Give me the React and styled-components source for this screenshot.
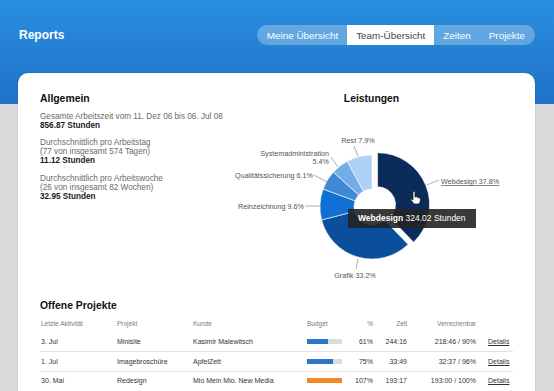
import styled, { createGlobalStyle } from 'styled-components';

const GlobalStyle = createGlobalStyle`
  html, body {
    margin: 0;
    height: 391px;
    overflow: hidden;
  }
  body {
    font-family: "Liberation Sans", Arial, sans-serif;
    background: linear-gradient(to bottom, #2a8fdf 0, #1f71c7 104px, #dadada 104px);
  }
`

const tabs = ['Meine Übersicht', 'Team-Übersicht', 'Zeiten', 'Projekte']

const stats = [
  { lines: ['Gesamte Arbeitszeit vom 11. Dez 06 bis 06. Jul 08'], value: '856.87 Stunden' },
  { lines: ['Durchschnittlich pro Arbeitstag', '(77 von insgesamt 574 Tagen)'], value: '11.12 Stunden' },
  { lines: ['Durchschnittlich pro Arbeitswoche', '(26 von insgesamt 82 Wochen)'], value: '32.95 Stunden' },
]

const slices = [
  { name: 'Webdesign', pct: 37.8, color: '#0b2c5a', explode: 6 },
  { name: 'Grafik', pct: 33.2, color: '#0b4e9b' },
  { name: 'Reinzeichnung', pct: 9.6, color: '#0f6fd4' },
  { name: 'Qualitätssicherung', pct: 6.1, color: '#3e88d4' },
  { name: 'Systemadministration', pct: 5.4, color: '#72ade8' },
  { name: 'Rest', pct: 7.9, color: '#aed0f2' },
]

const labels = [
  { text: ['Rest 7.9%'], x: 128, y: 30.5, anchor: 'middle', line: [124, 34, 128, 44] },
  { text: ['Systemadministration', '5.4%'], x: 99, y: 44, anchor: 'end', line: [101, 45, 108, 55] },
  { text: ['Qualitätssicherung 6.1%'], x: 83, y: 66, anchor: 'end', line: [84, 63, 97, 70] },
  { text: ['Reinzeichnung 9.6%'], x: 74, y: 97, anchor: 'end', line: [75, 94, 90, 94] },
  { text: ['Webdesign 37.8%'], x: 211, y: 72, anchor: 'start', line: [197, 73, 209, 68], underline: true },
  { text: ['Grafik 33.2%'], x: 125, y: 166, anchor: 'middle', line: [128, 147, 126, 157] },
]

const projects = [
  { date: '3. Jul', name: 'Minisite', client: 'Kasimir Malewitsch', pct: 61, time: '244:16', bill: '218:46 / 90%' },
  { date: '1. Jul', name: 'Imagebroschüre', client: 'ApfelZett', pct: 75, time: '33:49', bill: '32:37 / 96%' },
  { date: '30. Mai', name: 'Redesign', client: 'Mio Mein Mio. New Media', pct: 107, time: '193:17', bill: '193:00 / 100%' },
]

const CX = 142
const CY = 95
const R = 52
const RI = 18

const pt = (a, rad, dx = 0, dy = 0) => {
  const t = (a * Math.PI) / 180
  return `${(CX + dx + rad * Math.sin(t)).toFixed(2)} ${(CY + dy - rad * Math.cos(t)).toFixed(2)}`
}

const slicePath = (a0, a1, off) => {
  const mid = ((a0 + a1) / 2) * Math.PI / 180
  const dx = off ? off * Math.sin(mid) : 0
  const dy = off ? -off * Math.cos(mid) : 0
  const large = a1 - a0 > 180 ? 1 : 0
  return `M ${pt(a0, R, dx, dy)} A ${R} ${R} 0 ${large} 1 ${pt(a1, R, dx, dy)} L ${pt(a1, RI, dx, dy)} A ${RI} ${RI} 0 ${large} 0 ${pt(a0, RI, dx, dy)} Z`
}

const Donut = () => {
  let acc = 0
  return (
    <ChartSvg width="283" height="170" viewBox="0 0 283 170">
      {slices.map(s => {
        const a0 = acc * 3.6
        acc += s.pct
        const a1 = acc * 3.6
        return <path key={s.name} d={slicePath(a0, a1, s.explode)} fill={s.color} stroke="#fff" strokeWidth="0.6" />
      })}
      {labels.map(l => (
        <g key={l.text[0]}>
          <line x1={l.line[0]} y1={l.line[1]} x2={l.line[2]} y2={l.line[3]} stroke="#8a8a8a" strokeWidth="0.7" />
          {l.text.map((t, i) => (
            <text key={t} x={l.x} y={l.y + i * 7.5} textAnchor={l.anchor} textDecoration={l.underline ? 'underline' : undefined}>{t}</text>
          ))}
        </g>
      ))}
      <path
        transform="translate(180 79)"
        d="M3 1.3 a1 1 0 0 1 2 0 V6 h0.6 a1 1 0 0 1 1.6 0.4 a1 1 0 0 1 1.6 0.5 a1 1 0 0 1 1.5 0.7 V10 q0 2.2 -2 3 H4.2 L1 9.3 q-0.6 -1.1 0.6 -1.3 L3 9 Z"
        fill="#fff"
        stroke="#111"
        strokeWidth="0.7"
      />
    </ChartSvg>
  )
}

const App = () => {
  return (
    <>
      <GlobalStyle />
      <TopBar>
        <Brand>Reports</Brand>
        <Nav>
          {tabs.map(t => <Tab key={t} $active={t === 'Team-Übersicht'}>{t}</Tab>)}
        </Nav>
      </TopBar>
      <Card>
        <Overview>
          <section>
            <Heading>Allgemein</Heading>
            {stats.map(s => (
              <Stat key={s.value}>
                {s.lines.map(l => <div key={l}>{l}</div>)}
                <strong>{s.value}</strong>
              </Stat>
            ))}
          </section>
          <section>
            <Heading $center>Leistungen</Heading>
            <ChartBox>
              <Donut />
              <Tooltip><b>Webdesign</b> 324.02 Stunden</Tooltip>
            </ChartBox>
          </section>
        </Overview>
        <Projects>
          <Heading>Offene Projekte</Heading>
          <HeadRow>
            <span>Letzte Aktivität</span>
            <span>Projekt</span>
            <span>Kunde</span>
            <span>Budget</span>
            <Num>%</Num>
            <Num>Zeit</Num>
            <Num>Verrechenbar</Num>
            <span />
          </HeadRow>
          {projects.map(p => (
            <Row key={p.name}>
              <span>{p.date}</span>
              <span>{p.name}</span>
              <span>{p.client}</span>
              <Bar>
                <BarFill $over={p.pct > 100} style={{ width: `${Math.min(p.pct, 100)}%` }} />
              </Bar>
              <Num>{p.pct}%</Num>
              <Num>{p.time}</Num>
              <Num>{p.bill}</Num>
              <DetailLink>Details</DetailLink>
            </Row>
          ))}
        </Projects>
      </Card>
    </>
  )
}

export default App

const TopBar = styled.header`
  display: flex;
  justify-content: space-between;
  align-items: center;
  height: 20px;
  padding: 25px 19px 0 19px;
`

const Brand = styled.h1`
  margin: 0;
  font-size: 12px;
  font-weight: bold;
  color: #fff;
`

const Nav = styled.nav`
  display: flex;
  height: 20px;
  padding: 0 1px;
  border-radius: 10px;
  background: rgba(255, 255, 255, 0.28);
`

const Tab = styled.a`
  display: flex;
  align-items: center;
  padding: 0 9px;
  font-size: 9.9px;
  color: ${p => (p.$active ? '#444' : '#fff')};
  background: ${p => (p.$active ? '#fff' : 'transparent')};
`

const Card = styled.main`
  margin: 28px 19px 0 18px;
  height: 298.5px;
  padding: 19.5px 22px 0;
  background: #fff;
  border-radius: 10px 10px 0 0;
  box-shadow: 0 0 2px rgba(0, 0, 0, 0.15);
`

const Overview = styled.div`
  display: grid;
  grid-template-columns: 190px 1fr;
`

const Heading = styled.h2`
  margin: 0 0 7px;
  font-size: 10.4px;
  line-height: 12px;
  font-weight: bold;
  color: #111;
  text-align: ${p => (p.$center ? 'center' : 'left')};
`

const Stat = styled.div`
  font-size: 8.2px;
  line-height: 9px;
  color: #6a6a6a;
  & + & {
    margin-top: 8.5px;
  }
  strong {
    display: block;
    color: #1a1a1a;
  }
`

const ChartBox = styled.div`
  position: relative;
  height: 170px;
`

const ChartSvg = styled.svg`
  display: block;
  overflow: visible;
  text {
    font-family: "Liberation Sans", Arial, sans-serif;
    font-size: 7.2px;
    fill: #555;
  }
`

const Tooltip = styled.div`
  position: absolute;
  left: 118px;
  top: 97px;
  height: 19px;
  line-height: 19px;
  padding: 0 10px;
  white-space: nowrap;
  font-size: 8.5px;
  color: #fff;
  background: rgba(36, 36, 36, 0.9);
`

const Projects = styled.section`
  margin-top: 18.5px;
  h2 {
    margin-bottom: 1.5px;
  }
`

const HeadRow = styled.div`
  display: grid;
  grid-template-columns: 76px 76px 114px 40px 28px 34px 69px 36px;
  align-items: center;
  height: 19px;
  font-size: 6.5px;
  color: #7a7a7a;
  span {
    padding-left: 1px;
  }
`

const Row = styled(HeadRow)`
  height: 18.5px;
  font-size: 7px;
  color: #333;
  & + & {
    border-top: 1px solid #e0e0e0;
  }
`

const Num = styled.span`
  text-align: right;
  padding-right: 1px;
`

const Bar = styled.div`
  width: 35px;
  height: 5px;
  margin-left: 1px;
  background: #dcdcdc;
`

const BarFill = styled.div`
  height: 100%;
  background: ${p => (p.$over ? '#f08a26' : '#2b78cb')};
`

const DetailLink = styled.a`
  padding-left: 11px;
  color: #333;
  text-decoration: underline;
`
